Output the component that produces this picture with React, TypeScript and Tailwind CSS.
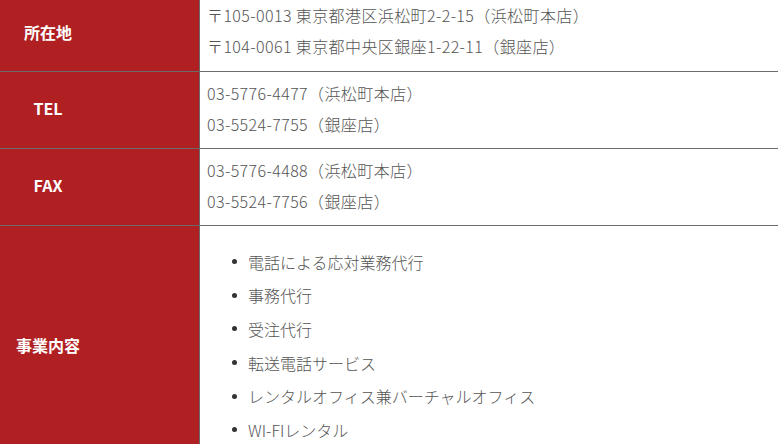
const font = { fontFamily: '"Noto Sans CJK JP", "Noto Sans", sans-serif' };

type Row = { label: string; lines?: string[]; list?: string[]; pad: string; labelPad: string };

const rows: Row[] = [
  {
    label: "所在地",
    lines: ["〒105-0013 東京都港区浜松町2-2-15（浜松町本店）", "〒104-0061 東京都中央区銀座1-22-11（銀座店）"],
    pad: "pt-0 pb-[9px]",
    labelPad: "pb-[7px]",
  },
  {
    label: "TEL",
    lines: ["03-5776-4477（浜松町本店）", "03-5524-7755（銀座店）"],
    pad: "pt-[6px] pb-[8px]",
    labelPad: "pb-[5px]",
  },
  {
    label: "FAX",
    lines: ["03-5776-4488（浜松町本店）", "03-5524-7756（銀座店）"],
    pad: "pt-[6px] pb-[8px]",
    labelPad: "pb-[5px]",
  },
  {
    label: "事業内容",
    list: [
      "電話による応対業務代行",
      "事務代行",
      "受注代行",
      "転送電話サービス",
      "レンタルオフィス兼バーチャルオフィス",
      "WI-FIレンタル",
    ],
    pad: "pt-[19px] pb-[20px]",
    labelPad: "pb-[3px]",
  },
];

export default function App() {
  return (
    <div className="w-[778px] h-[444px] overflow-hidden bg-white" style={font}>
      {rows.map((row, i) => (
        <div
          key={row.label}
          className={`grid grid-cols-[200px_1fr] ${i < rows.length - 1 ? "border-b border-[#6b6b6b]" : ""}`}
        >
          <div className={`bg-[#b02023] border-r border-[#6b6b6b] flex items-center ${row.labelPad}`}>
            <span className="w-[96px] text-center text-white font-bold text-[16px]">{row.label}</span>
          </div>
          <div className={`pl-[7px] text-[16px] font-light text-[#555] ${row.pad}`}>
            {row.lines?.map((l) => (
              <p key={l} className="leading-[31px] tracking-[0.4px]">
                {l}
              </p>
            ))}
            {row.list && (
              <ul className="pl-[25px]">
                {row.list.map((item) => (
                  <li key={item} className="flex items-center h-[33.6px]">
                    <span className="w-[5px] h-[5px] rounded-full bg-[#333] mr-[11px] shrink-0" />
                    {item}
                  </li>
                ))}
              </ul>
            )}
          </div>
        </div>
      ))}
    </div>
  );
}
